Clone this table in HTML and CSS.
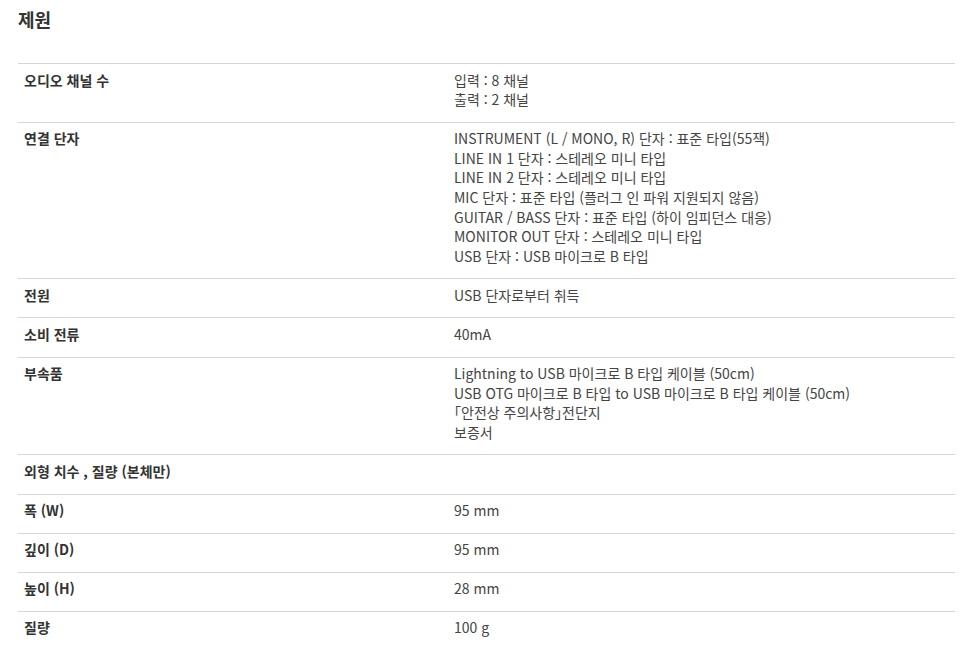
FILE: index.html
```html
<!DOCTYPE html>
<html lang="ko">
<head>
    <meta charset="UTF-8">
    <meta name="viewport" content="width=device-width, initial-scale=1.0">
    <title>제원</title>
    <link rel="stylesheet" href="styles.css">
</head>
<body>
    <div class="spec">
        <h2 class="spec-title">제원</h2>

        <table class="spec-table">
            <tr>
                <th>오디오 채널 수</th>
                <td>입력 : 8 채널<br>출력 : 2 채널</td>
            </tr>
            <tr>
                <th>연결 단자</th>
                <td>
                    INSTRUMENT (L / MONO, R) 단자 : 표준 타입(55잭)<br>
                    LINE IN 1 단자 : 스테레오 미니 타입<br>
                    LINE IN 2 단자 : 스테레오 미니 타입<br>
                    MIC 단자 : 표준 타입 (플러그 인 파워 지원되지 않음)<br>
                    GUITAR / BASS 단자 : 표준 타입 (하이 임피던스 대응)<br>
                    MONITOR OUT 단자 : 스테레오 미니 타입<br>
                    USB 단자 : USB 마이크로 B 타입
                </td>
            </tr>
            <tr>
                <th>전원</th>
                <td>USB 단자로부터 취득</td>
            </tr>
            <tr>
                <th>소비 전류</th>
                <td>40mA</td>
            </tr>
            <tr>
                <th>부속품</th>
                <td>
                    Lightning to USB 마이크로 B 타입 케이블 (50cm)<br>
                    USB OTG 마이크로 B 타입 to USB 마이크로 B 타입 케이블 (50cm)<br>
                    <span class="half-width">「</span>안전상 주의사항<span class="half-width">」</span>전단지<br>
                    보증서
                </td>
            </tr>
            <tr>
                <th>외형 치수 , 질량 (본체만)</th>
                <td></td>
            </tr>
            <tr>
                <th>폭 (W)</th>
                <td>95 mm</td>
            </tr>
            <tr>
                <th>깊이 (D)</th>
                <td>95 mm</td>
            </tr>
            <tr>
                <th>높이 (H)</th>
                <td>28 mm</td>
            </tr>
            <tr>
                <th>질량</th>
                <td>100 g</td>
            </tr>
        </table>
    </div>
</body>
</html>
```

FILE: styles.css
```css
body {
    margin: 0;
    background-color: #fff;
    color: #3a3a3a;
    font-family: "Noto Sans CJK KR", "Noto Sans", sans-serif;
}

.spec {
    padding: 0 5px 0 18px;
}

.spec-title {
    margin: 0;
    padding-top: 6px;
    height: 57px;
    font-size: 18px;
    font-weight: bold;
    line-height: 26px;
    color: #333;
}

.spec-table {
    width: 100%;
    border-collapse: collapse;
    font-size: 14px;
    line-height: 19.6px;
}

.spec-table tr {
    border-top: 1px solid #d6d6d6;
}

.spec-table th,
.spec-table td {
    padding: 6.5px 0 12px 0;
    vertical-align: top;
    text-align: left;
}

.spec-table th {
    width: 430px;
    padding-left: 6px;
    font-weight: bold;
    color: #333;
}

.spec-table td {
    font-weight: normal;
    color: #444;
}

/* the corner brackets are full width in the CJK font */
.half-width {
    font-feature-settings: "halt";
}
```
